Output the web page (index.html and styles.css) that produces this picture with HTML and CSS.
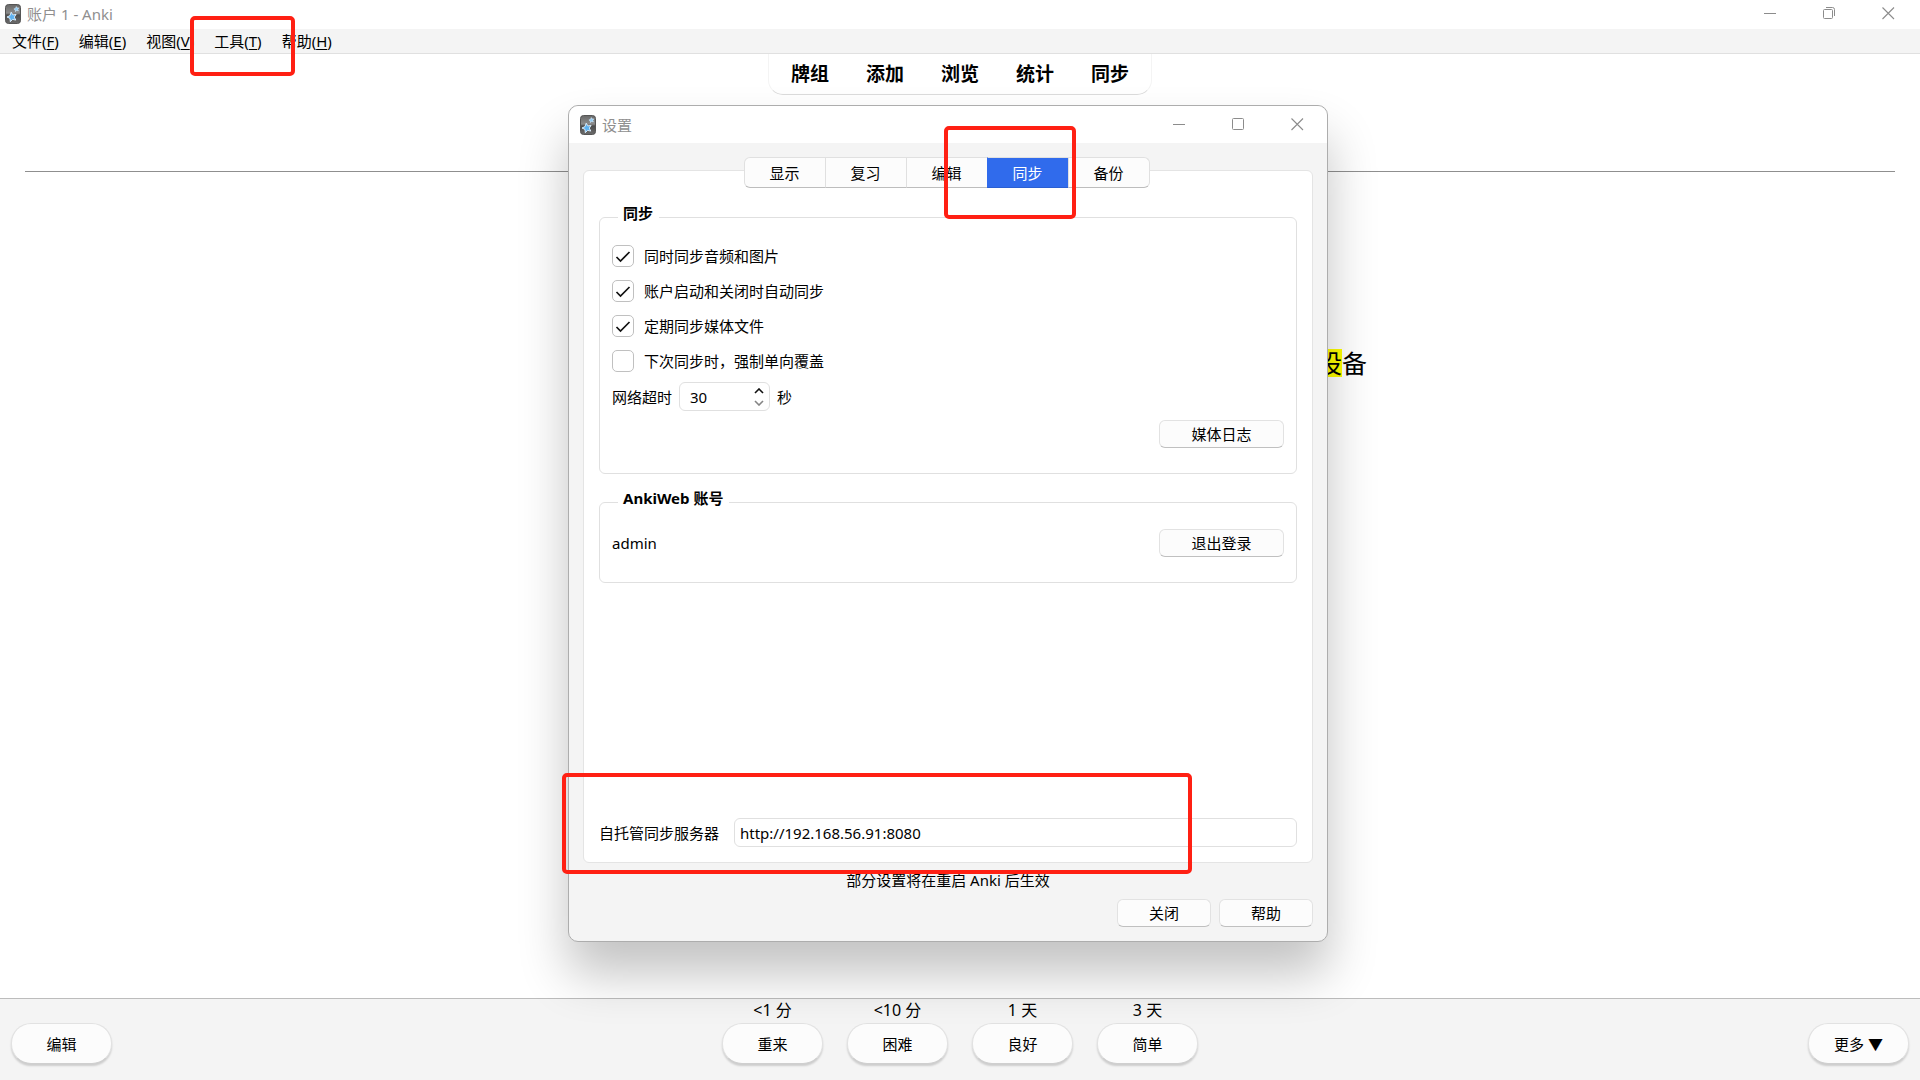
FILE: index.html
```html
<!DOCTYPE html>
<html lang="zh-CN">
<head>
<meta charset="utf-8">
<title>账户 1 - Anki</title>
<link rel="stylesheet" href="styles.css">
</head>
<body>
<svg class="defs" aria-hidden="true">
  <defs>
    <linearGradient id="case" x1="0" y1="0" x2="0" y2="1">
      <stop offset="0" stop-color="#686868"/><stop offset="0.45" stop-color="#8c8c8c"/><stop offset="0.55" stop-color="#4c4c4c"/><stop offset="1" stop-color="#6c6c6c"/>
    </linearGradient>
  </defs>
  <symbol id="anki" viewBox="0 0 16 20">
    <rect x="0.5" y="0.5" width="15" height="19" rx="3" fill="url(#case)" stroke="#555"/>
    <path d="M6.200 8.200l1.700 2.700 3.200-.5-1.800 2.700 1.500 3-3.200-.7-2.300 2.300-.3-3.300-3-1.400 3-1.400z" fill="#5fb2f0" stroke="#e4f3ff" stroke-width="0.9"/>
    <path d="M11.300 2.600l.7 1.400 1.800-.1-1 1.400.6 1.600-1.700-.4-1.300 1.100-.1-1.700-1.400-.9 1.600-.6z" fill="#8fcbf5" stroke="#d5ecfd" stroke-width="0.6"/>
  </symbol>
  <symbol id="minimize" viewBox="0 0 13 13"><path d="M0 6.500h12" stroke="#8c8c8c"/></symbol>
  <symbol id="maximize" viewBox="0 0 13 13"><rect x="0.5" y="0.5" width="11" height="11" rx="1" fill="none" stroke="#8c8c8c"/></symbol>
  <symbol id="restore" viewBox="0 0 13 13"><path d="M1.500 2.500h7a1 1 0 0 1 1 1v7a1 1 0 0 1-1 1h-7a1 1 0 0 1-1-1v-7a1 1 0 0 1 1-1zM3 .5h6.500a2 2 0 0 1 2 2V9" fill="none" stroke="#8c8c8c"/></symbol>
  <symbol id="close" viewBox="0 0 13 13"><path d="M.5.5l11.500 11.500M12 .5L.5 12" stroke="#8c8c8c" stroke-width="1.100"/></symbol>
</svg>

<header class="titlebar">
  <svg class="app-icon"><use href="#anki"/></svg>
  <span class="title">账户 1 - Anki</span>
  <div class="window-controls">
    <button aria-label="最小化"><svg><use href="#minimize"/></svg></button>
    <button aria-label="还原"><svg><use href="#restore"/></svg></button>
    <button aria-label="关闭窗口"><svg><use href="#close"/></svg></button>
  </div>
</header>

<nav class="menubar">
  <button>文件(<u>F</u>)</button>
  <button>编辑(<u>E</u>)</button>
  <button>视图(<u>V</u>)</button>
  <button>工具(<u>T</u>)</button>
  <button>帮助(<u>H</u>)</button>
  <i class="mark mark-tools"></i>
</nav>

<main class="reviewer">
  <nav class="toolbar">
    <a href="#decks">牌组</a>
    <a href="#add">添加</a>
    <a href="#browse">浏览</a>
    <a href="#stats">统计</a>
    <a href="#sync">同步</a>
  </nav>
  <hr class="divider">
  <div class="card"><mark>设</mark>备</div>
</main>

<footer class="answer-bar">
  <button class="pill">编辑</button>
  <div class="answers">
    <div class="answer"><span>&lt;1 分</span><button class="pill">重来</button></div>
    <div class="answer"><span>&lt;10 分</span><button class="pill">困难</button></div>
    <div class="answer"><span>1 天</span><button class="pill">良好</button></div>
    <div class="answer"><span>3 天</span><button class="pill">简单</button></div>
  </div>
  <button class="pill">更多 ▼</button>
</footer>

<section class="dialog" role="dialog" aria-label="设置">
  <header class="titlebar dialog-title">
    <svg class="app-icon"><use href="#anki"/></svg>
    <span class="title">设置</span>
    <div class="window-controls">
      <button aria-label="最小化"><svg><use href="#minimize"/></svg></button>
      <button aria-label="最大化"><svg><use href="#maximize"/></svg></button>
      <button aria-label="关闭窗口"><svg><use href="#close"/></svg></button>
    </div>
  </header>
  <div class="dialog-body">
    <div class="tabs" role="tablist">
      <button role="tab">显示</button>
      <button role="tab">复习</button>
      <button role="tab">编辑</button>
      <button role="tab" class="active" aria-selected="true">同步</button>
      <button role="tab">备份</button>
    </div>
    <div class="panel">
      <fieldset class="group">
        <legend>同步</legend>
        <div class="checks">
          <label><input type="checkbox" checked>同时同步音频和图片</label>
          <label><input type="checkbox" checked>账户启动和关闭时自动同步</label>
          <label><input type="checkbox" checked>定期同步媒体文件</label>
          <label><input type="checkbox">下次同步时，强制单向覆盖</label>
        </div>
        <div class="timeout">
          <label for="timeout">网络超时</label>
          <div class="spinner">
            <input id="timeout" type="number" value="30">
            <div class="steps">
              <button aria-label="增加"><svg viewBox="0 0 10 6"><path d="M1 5l4-4 4 4" fill="none" stroke="#111" stroke-width="1.600"/></svg></button>
              <button aria-label="减少"><svg viewBox="0 0 10 6"><path d="M1 1l4 4 4-4" fill="none" stroke="#858585" stroke-width="1.600"/></svg></button>
            </div>
          </div>
          <span>秒</span>
        </div>
        <div class="actions"><button class="btn wide">媒体日志</button></div>
      </fieldset>
      <fieldset class="group account">
        <legend>AnkiWeb 账号</legend>
        <div class="account-row"><span>admin</span><button class="btn wide">退出登录</button></div>
      </fieldset>
      <div class="server">
        <label for="server">自托管同步服务器</label>
        <input id="server" type="text" value="http://192.168.56.91:8080">
      </div>
    </div>
    <p class="hint">部分设置将在重启 Anki 后生效</p>
    <div class="dialog-buttons">
      <button class="btn">关闭</button>
      <button class="btn">帮助</button>
    </div>
  </div>
  <i class="mark mark-tab"></i>
  <i class="mark mark-server"></i>
</section>
</body>
</html>
```

FILE: styles.css
```css
* { box-sizing: border-box; }

body {
  margin: 0;
  min-height: 100vh;
  display: flex;
  flex-direction: column;
  position: relative;
  overflow-x: hidden;
  background: #fff;
  color: #000;
  font: 15px/20px "Noto Sans", "Noto Sans CJK SC", sans-serif;
}

button, input { font: inherit; color: inherit; margin: 0; }
button { padding: 0; border: 0; background: none; }
.defs { position: absolute; width: 0; height: 0; }

/* Window chrome */
.titlebar {
  height: 29px;
  display: flex;
  align-items: center;
  padding: 0 25px 2px 5px;
  background: #fff;
  color: #8f8f8f;
}
.app-icon { width: 16px; height: 20px; margin-right: 6px; }
.window-controls { margin-left: auto; display: flex; gap: 46px; }
.window-controls button { width: 13px; height: 13px; display: flex; }
.window-controls svg { width: 13px; height: 13px; }

.menubar {
  position: relative;
  height: 25px;
  display: flex;
  align-items: center;
  gap: 20px;
  padding: 0 12px;
  background: #f4f4f4;
  border-bottom: 1px solid #e0e0e0;
}
.menubar u { text-underline-offset: 2px; text-decoration-thickness: 1px; }

/* Reviewer */
.reviewer { flex: 1; display: flex; flex-direction: column; }
.toolbar {
  align-self: center;
  height: 41px;
  display: flex;
  align-items: center;
  gap: 37px;
  padding: 0 22px;
  border: 1px solid #f4f4f4;
  border-top: 0;
  border-bottom-color: #dcdcdc;
  border-radius: 0 0 15px 15px;
  font-size: 19px;
  font-weight: 700;
}
.toolbar a { color: inherit; text-decoration: none; }
.divider {
  align-self: stretch;
  margin: 76px 25px 0;
  border: 0;
  border-top: 1px solid #8f8f8f;
}
.card {
  align-self: center;
  width: 814px;
  margin-top: 173px;
  text-align: right;
  font-size: 25px;
  line-height: 36px;
}
.card mark { background: linear-gradient(#ff0, #ff0) center / 100% 28px no-repeat; color: inherit; }

/* Answer bar */
.answer-bar {
  display: flex;
  justify-content: space-between;
  align-items: flex-end;
  height: 82px;
  padding: 0 11px 16px;
  background: #f4f4f4;
  border-top: 1px solid #bcbcbc;
}
.answers { display: flex; gap: 24px; }
.answer { display: flex; flex-direction: column; align-items: center; font-size: 16px; gap: 3px; }
.pill {
  width: 101px;
  height: 41px;
  border: 1px solid #e2e2e2;
  border-bottom-color: #cfcfcf;
  border-radius: 20px;
  background: #fcfcfc;
  box-shadow: 0 2px 2px rgba(0, 0, 0, 0.16);
  font-size: 15px;
}

/* Preferences window */
.dialog {
  position: absolute;
  top: 105px;
  left: 50%;
  width: 760px;
  height: calc(100vh - 243px);
  min-height: 700px;
  margin-left: -392px;
  display: flex;
  flex-direction: column;
  border: 1px solid #adadad;
  border-radius: 10px;
  background: #f4f4f4;
  box-shadow: 0 32px 50px rgba(0, 0, 0, 0.24);
}
.dialog-title { height: 37px; padding: 0 23px 0 11px; border-radius: 10px 10px 0 0; }
.dialog-body { flex: 1; display: flex; flex-direction: column; padding: 14px; }

.tabs { z-index: 1; align-self: center; display: flex; margin: 0 3px -18px 0; }
.tabs button {
  width: 82px;
  height: 31px;
  margin-right: -1px;
  border: 1px solid #e0e0e0;
  border-bottom-color: #bdbdbd;
  background: #fcfcfc;
}
.tabs button:first-child { border-radius: 6px 0 0 6px; }
.tabs button:last-child { border-radius: 0 6px 6px 0; margin-right: 0; }
.tabs .active { background: #306bec; color: #fff; border-color: #e0e0e0 #306bec #2a5fd2; }

.panel {
  flex: 1;
  display: flex;
  flex-direction: column;
  padding: 32px 15px 15px;
  border: 1px solid #e4e4e4;
  border-radius: 6px;
  background: #fff;
}
.group {
  min-width: 0;
  margin: 0;
  padding: 14px 12px 25px;
  border: 1px solid #e0e0e0;
  border-radius: 6px;
}
.group legend { margin-left: 6px; padding: 0 6px 8px 5px; font-weight: 700; }
.account { margin-top: 14px; padding-top: 13px; }

.checks { display: flex; flex-direction: column; gap: 13px; }
.checks label { display: flex; align-items: center; gap: 10px; height: 22px; }
.checks input {
  appearance: none;
  width: 22px;
  height: 22px;
  border: 1px solid #c0c0c0;
  border-radius: 5px;
  background: #fff;
}
.checks input:checked {
  background: #fff url("data:image/svg+xml,%3Csvg xmlns='http://www.w3.org/2000/svg' viewBox='0 0 20 20'%3E%3Cpath d='M3.500 11l4 4L16.500 6' fill='none' stroke='%23111' stroke-width='1.700'/%3E%3C/svg%3E") center / 20px 20px no-repeat;
}

.timeout { display: flex; align-items: center; gap: 7px; margin-top: 10px; }
.spinner {
  display: flex;
  align-items: center;
  width: 91px;
  height: 29px;
  padding: 0 5px 0 10px;
  border: 1px solid #e0e0e0;
  border-radius: 6px;
}
.spinner input { flex: 1; min-width: 0; padding: 0; border: 0; outline: 0; background: none; appearance: textfield; }
.spinner input::-webkit-inner-spin-button { display: none; }
.steps { display: flex; flex-direction: column; gap: 6px; }
.steps button { display: flex; }
.steps svg { width: 10px; height: 6px; }

.btn {
  width: 94px;
  height: 28px;
  border: 1px solid #e2e2e2;
  border-bottom-color: #c0c0c0;
  border-radius: 6px;
  background: #fcfcfc;
}
.wide { width: 125px; }
.actions { display: flex; justify-content: flex-end; margin-top: 9px; }
.account-row { display: flex; justify-content: space-between; align-items: center; }

.server { display: flex; align-items: center; gap: 15px; margin-top: auto; }
.server input {
  flex: 1;
  height: 29px;
  padding: 0 5px;
  border: 1px solid #e0e0e0;
  border-radius: 6px;
  background: #fff;
}
.hint { margin: 7px 0 9px; text-align: center; }
.dialog-buttons { display: flex; justify-content: flex-end; gap: 8px; }

/* Callout frames over the controls being explained */
.mark {
  position: absolute;
  z-index: 2;
  border: 4px solid #ff2013;
  border-radius: 5px;
  pointer-events: none;
}
.mark-tools { left: 190px; top: -13px; width: 105px; height: 60px; }
.mark-tab { left: 375px; top: 20px; width: 132px; height: 93px; }
.mark-server { left: -7px; top: 667px; width: 630px; height: 101px; }
```
